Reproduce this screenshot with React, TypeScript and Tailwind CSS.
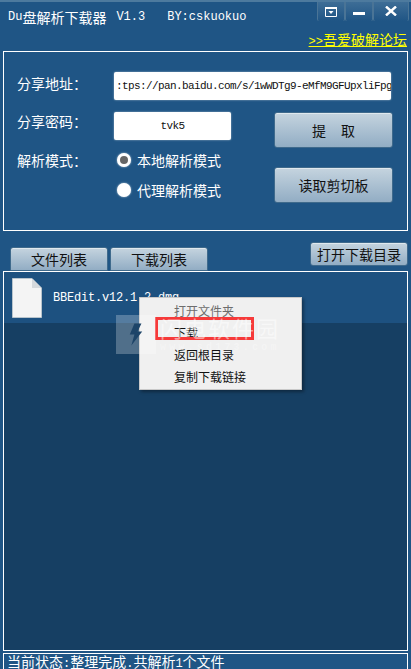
const mono = "font-['Liberation_Mono','Noto_Sans_CJK_SC',monospace]";
const cjk = "font-['Noto_Sans_CJK_SC','Liberation_Sans',sans-serif]";
const btn = "flex items-center justify-center rounded-[3px] border border-[#3f6a8c] bg-gradient-to-b from-[#c5d4df] to-[#92adc4] text-[#111] shadow-[inset_0_1px_0_#dfe8ee]";
const latin = `${mono} text-[12px]`;
const small = `${mono} text-[11px] tracking-[-0.6px]`;

function WinBtn({ w, children }: { w: string; children: React.ReactNode }) {
  return <div className={`${w} h-[19px] flex items-center justify-center border-l border-r border-[#4a7496] rounded-b-[2px] bg-gradient-to-b from-[#3d6d96] to-[#1f5585]`}>{children}</div>;
}

function Radio({ checked, label }: { checked?: boolean; label: string }) {
  return (
    <div className="flex items-center gap-[6px] h-[20px]">
      <div className="w-[14px] h-[14px] rounded-full bg-white shadow-[0_0_2px_#c8d4dd] flex items-center justify-center">
        {checked && <div className="w-[8px] h-[8px] rounded-full bg-[#666]" />}
      </div>
      <span className="text-[14px] text-white leading-[20px]">{label}</span>
    </div>
  );
}

export default function App() {
  return (
    <div className={`${cjk} w-[411px] h-[669px] overflow-hidden relative bg-[#1f5585] flex flex-col border-t-2 border-[#4d7a9e]`}>
      <div className="flex h-[22px] shrink-0 pl-[8px] pr-[2px] items-start justify-between">
        <div className="text-[14px] leading-[14px] mt-[8px] text-white whitespace-pre flex items-center">
          <span className={latin}>Du</span>
          <span>盘解析下载器</span>
          <span className={`${latin} ml-[10px]`}>V1.3</span>
          <span className={`${latin} ml-[22px]`}>BY:cskuokuo</span>
        </div>
        <div className="flex">
          <WinBtn w="w-[28px]">
            <svg width="12" height="10" viewBox="0 0 12 10"><path d="M0.5 0.5h11v9h-11z" fill="none" stroke="#fff" /><path d="M0 0h12v2h-12z" fill="#fff" /><path d="M3.5 4h5l-2.5 3z" fill="#fff" /></svg>
          </WinBtn>
          <WinBtn w="w-[28px]">
            <svg width="12" height="4" viewBox="0 0 12 4" className="mt-[5px]"><rect y="0" width="12" height="3" fill="#fff" /></svg>
          </WinBtn>
          <WinBtn w="w-[36px]">
            <svg width="12" height="10" viewBox="0 0 12 10" className="mb-[2px]"><path d="M1 0.5l10 9M11 0.5l-10 9" stroke="#fff" strokeWidth="2.4" /></svg>
          </WinBtn>
        </div>
      </div>
      <div className="h-[27px] shrink-0 pr-[4px] flex justify-end items-center pt-[6px]">
        <span className="text-[14px] leading-[16px] text-[#ffff00] underline"><span className={latin}>&gt;&gt;</span>吾爱破解论坛</span>
      </div>
      <div className="mx-[3px] h-[180px] border border-white pl-[13px] pr-[14px] pt-[20px] text-white flex flex-col shrink-0">
        <div className="flex items-start h-[28px]">
          <span className="w-[97px] text-[14px] leading-[22px]">分享地址：</span>
          <div className={`${small} w-[277px] h-[28px] bg-white rounded-[2px] leading-[28px] text-[#111] overflow-hidden whitespace-nowrap px-[2px] shadow-[0_0_2px_#a9bccb]`}>:tps://pan.baidu.com/s/1wWDTg9-eMfM9GFUpxliFpg</div>
        </div>
        <div className="flex mt-[12px]">
          <div className="w-[259px] flex flex-col">
            <div className="flex items-start">
              <span className="w-[97px] text-[14px] leading-[18px]">分享密码：</span>
              <div className={`${small} w-[117px] h-[28px] bg-white rounded-[2px] leading-[28px] text-[#111] text-center shadow-[0_0_2px_#a9bccb]`}>tvk5</div>
            </div>
            <div className="flex mt-[10px]">
              <span className="w-[97px] text-[14px] leading-[20px]">解析模式：</span>
              <div className="flex flex-col gap-[10px] pl-[3px]">
                <Radio checked label="本地解析模式" />
                <Radio label="代理解析模式" />
              </div>
            </div>
          </div>
          <div className="flex flex-col gap-[19px]">
            <div className={`${btn} w-[119px] h-[36px] text-[14px] gap-[15px]`}><span>提</span><span>取</span></div>
            <div className={`${btn} w-[119px] h-[36px] text-[14px]`}>读取剪切板</div>
          </div>
        </div>
      </div>
      <div className="h-[40px] pl-[10px] pr-[3px] flex justify-between shrink-0">
        <div className="flex gap-[2px] pt-[16px]">
          <div className={`${btn} w-[98px] h-[24px] text-[14px] rounded-b-none`}>文件列表</div>
          <div className={`${btn} w-[98px] h-[24px] text-[14px] rounded-b-none`}>下载列表</div>
        </div>
        <div className={`${btn} w-[98px] h-[24px] mt-[11px] text-[14px]`}>打开下载目录</div>
      </div>
      <div className="relative mx-[3px] h-[380px] border border-white bg-[#163f63] shrink-0">
        <div className="h-[51px] bg-[#1d5180] flex items-center pl-[8px]">
          <svg width="30" height="40" viewBox="0 0 30 40" className="mt-[1px]">
            <path d="M0.5 0.5H20L29.5 10V39.5H0.5Z" fill="#f4f4f4" stroke="#b8c4cc" />
            <path d="M20 0.5V10H29.5Z" fill="#d5d9dc" />
          </svg>
          <span className={`${latin} tracking-[-0.2px] text-white ml-[11px] whitespace-pre`}>BBEdit.v12.1.2.dmg</span>
        </div>
        <div className="absolute left-[135px] top-[25px] w-[163px] h-[93px] bg-[#f0f0f0] border border-[#c9c9c9] shadow-[2px_2px_3px_rgba(0,0,0,0.35)] text-[12px] text-[#111] pl-[34px] pt-[2px] leading-[22px]">
          <div className="text-[#6d6d6d]">打开文件夹</div>
          <div>下载</div>
          <div>返回根目录</div>
          <div>复制下载链接</div>
        </div>
        <div className="absolute left-[151px] top-[45px] w-[99px] h-[23px] border-[3px] border-[#f63a3a]" />
        <div className="absolute left-[112px] top-[43px] w-[40px] h-[39px] bg-white/25 flex items-center justify-center">
          <svg width="14" height="29" viewBox="0 0 18 28"><path d="M7 0h9L11 10h6L3 28l4-14H1Z" fill="#1d4468" /></svg>
        </div>
        <div className="absolute left-[156px] top-[42px] text-[22px] leading-[26px] tracking-[2px] text-white/50 whitespace-nowrap">闪电软件园</div>
        <div className={`${mono} absolute left-[156px] top-[70px] text-[10px] leading-[12px] tracking-[3.2px] font-bold text-white/30 whitespace-nowrap`}>www.sd173.com</div>
      </div>
      <div className="mx-[3px] mt-[2px] flex-1 border-t border-l border-r border-white px-[3px] text-[14px] leading-[14px] text-white whitespace-nowrap">
        当前状态<span className={latin}>:</span>整理完成<span className={latin}>.</span>共解析<span className={latin}>1</span>个文件
      </div>
    </div>
  );
}
